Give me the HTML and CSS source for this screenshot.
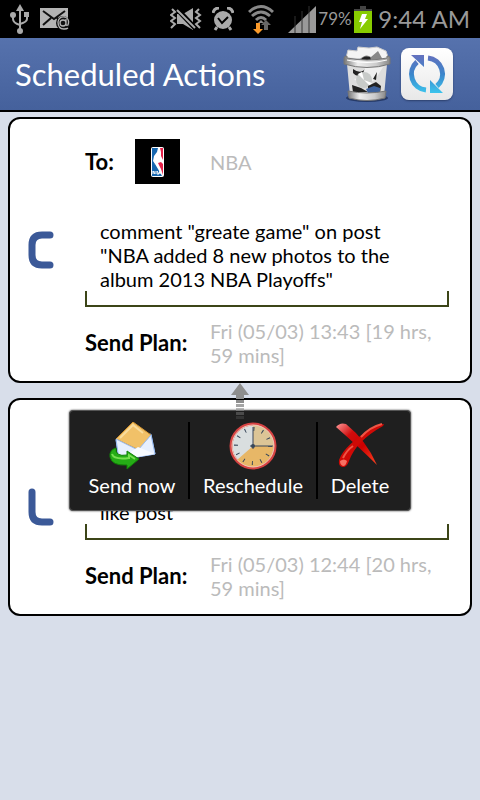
FILE: index.html
```html
<!DOCTYPE HTML>
<html lang="en">
<head>
<meta charset="utf-8">
<meta name="viewport" content="width=device-width, initial-scale=1">
<title>Scheduled Actions</title>
<link rel="stylesheet" href="styles.css">
</head>

<body>
<!-- status bar -->
<div class="status">
	<svg class="usb" width="20" height="32" viewBox="0 0 20 32" fill="none" stroke="#aaa" stroke-width="2">
		<path d="M10 5v22M3 12v4q0 4 7 6M17 12v4q0 3 -7 5"/>
		<path d="M10 1l4 7H6z" fill="#aaa" stroke="none"/>
		<circle cx="10" cy="28" r="3" fill="#aaa" stroke="none"/>
		<circle cx="3" cy="12" r="3" fill="#aaa" stroke="none"/>
		<path d="M14 9h5v5h-5z" fill="#aaa" stroke="none"/>
	</svg>
	<svg class="mail" width="30" height="24" viewBox="0 0 30 24">
		<path d="M0 1h28v20H0z" fill="#b4b4b4"/>
		<path d="M3 4l11 8L25 4M3 18l8-7M17 11l4 4" fill="none" stroke="#111" stroke-width="2"/>
		<circle cx="23" cy="16" r="7" fill="#111"/>
		<path d="M26 12v5q0 2 2 1q2-6-3-8q-6-1-7 5q0 7 6 7q3 0 4-1M26 16a3 3 0 1 1-6 0a3 3 0 0 1 6 0" fill="none" stroke="#b4b4b4" stroke-width="1.3"/>
	</svg>
	<svg class="mute" width="32" height="22" viewBox="0 0 32 22">
		<path d="M7 6h6l10-6v22l-10-6H7z" fill="#aaa"/>
		<path d="M6 0l19 20" stroke="#000" stroke-width="5"/>
		<path d="M7 2l18 18" stroke="#aaa" stroke-width="2"/>
		<path d="M2 1l3 3-4 3 4 3-4 3 4 3-4 4M29 1l-3 3 4 3-4 3 4 3-4 3 4 4" fill="none" stroke="#aaa" stroke-width="2"/>
	</svg>
	<svg class="alarm" width="22" height="24" viewBox="0 0 22 24">
		<circle cx="11" cy="13" r="9" fill="#aaa"/>
		<path d="M1 6q1-5 6-5M21 6q-1-5-6-5M5 20l-2 3M17 20l2 3" fill="none" stroke="#aaa" stroke-width="3"/>
		<path d="M6 11l4 5 6-6" fill="none" stroke="#000" stroke-width="2"/>
	</svg>
	<svg class="wifi" width="26" height="30" viewBox="0 0 26 30">
		<path d="M1 8q12-11 24 0M4 12q9-8 18 0M8 16q5-5 10 0" fill="none" stroke="#888" stroke-width="3"/>
		<path d="M13 16l3 3h-6z" fill="#888"/>
		<path d="M8 19h4v6h3l-5 5-5-5h3z" fill="#fa9a2a"/>
		<path d="M16 26v-5h-3l5-5 5 5h-3v5z" fill="#666"/>
	</svg>
	<svg class="signal" width="28" height="27" viewBox="0 0 28 27">
		<path d="M28 0v27H0z" fill="#999"/>
		<path d="M7 10v17M14 5v22M21 0v27" stroke="#333" stroke-width="1"/>
	</svg>
	<span class="percent">79%</span>
	<svg class="battery" width="18" height="27" viewBox="0 0 18 27">
		<path d="M6 0h6v3h6v3H0V3h6z" fill="#444"/>
		<path d="M0 5h18v22H0z" fill="#8c0"/>
		<path d="M8 8h5l-2 5h3l-8 10 2-7H5z" fill="#fff"/>
	</svg>
	<span class="clock">9:44 AM</span>
</div>

<header class="header">
	<h1>Scheduled Actions</h1>
	<button type="button" class="tool trash" aria-label="Clear">
		<svg width="48" height="56" viewBox="0 0 48 56">
			<defs>
				<linearGradient id="metal" x1="0" x2="1" y1="0" y2="0">
					<stop offset="0" stop-color="#777"/>
					<stop offset="0.3" stop-color="#eee"/>
					<stop offset="0.7" stop-color="#ccc"/>
					<stop offset="1" stop-color="#888"/>
				</linearGradient>
			</defs>
			<ellipse cx="24" cy="52" rx="21" ry="4" fill="#263a68"/>
			<path d="M3 12l2-8 9 1 1-4 11 1 8-1 9 4 3 9z" fill="#f4f4f4" stroke="#ccc" stroke-width="1"/>
			<path d="M17 13q6-6 11-2l7-6 5 9z" fill="#888"/>
			<path d="M18 14q2-5 9-3l1 3z" fill="#222"/>
			<path d="M4 18h40l-3 32H7z" fill="#ddd"/>
			<path d="M10 23q8 6 13-1l-3 7q-6 3-10-2zM9 39l9 3 7 4H10z" fill="#222"/>
			<path d="M22 22l18-1-8 13-14 5-7-6q8 0 11-11z" fill="#efefef"/>
			<circle cx="21" cy="34" r="8" fill="#c8cbc9"/>
			<path d="M21 34l-6-6 4-2zM21 34l8 3-2 3z" fill="#fff"/>
			<path d="M34 26l-4 7 3 1zM25 40l8-4 5 4-1 7-12-2z" fill="#222"/>
			<path d="M23 43l8-3 6 2v5H25z" fill="#3d619b"/>
			<path d="M1 12q0-2 3-2v2q20 4 40 0v-2q3 0 3 2v6q-23 7-46 0z" fill="url(#metal)" stroke="#777" stroke-width="1"/>
			<path d="M4 14q20 5 40 0" fill="none" stroke="#fff" stroke-width="1"/>
			<path d="M5 45q19 4 38 0l-1 7q-18 5-36 0z" fill="url(#metal)" stroke="#777" stroke-width="1"/>
		</svg>
	</button>
	<button type="button" class="tool refresh" aria-label="Refresh">
		<svg width="40" height="40" viewBox="0 0 40 40">
			<defs>
				<linearGradient id="sync" gradientUnits="userSpaceOnUse" x1="0" x2="0" y1="0" y2="40">
					<stop offset="0" stop-color="#6670bd"/>
					<stop offset="0.5" stop-color="#3b85cb"/>
					<stop offset="1" stop-color="#3bc7ee"/>
				</linearGradient>
			</defs>
			<g fill="none" stroke="url(#sync)" stroke-width="5">
				<path d="M21 4a16 16 0 0 1 9 28"/>
				<path d="M19 36a16 16 0 0 1-9-28"/>
			</g>
			<path d="M4 1h13v12zM23 26v13h13z" fill="url(#sync)"/>
		</svg>
	</button>
</header>

<main class="list">
	<article class="card">
		<svg class="type" width="26" height="38" viewBox="0 0 26 38">
			<path d="M22 4H14Q4 4 4 14V24Q4 34 14 34H22"/>
		</svg>
		<div class="body">
			<div class="row to">
				<span class="label">To:</span>
				<svg class="logo" width="45" height="45" viewBox="0 0 45 45">
					<path d="M0 0h45v45H0z" fill="#000"/>
					<rect x="16" y="8" width="13" height="30" rx="2" fill="#fff"/>
					<path d="M17 9h6l-1 4-3 4-1 5 2 3-2 7h-1z" fill="#1767af"/>
					<path d="M17 28l3-3 3 5 4 7H17z" fill="#1767af"/>
					<path d="M25 9h3v27l-2-6-3-6 3-1 2 2v-4l-2-4v-4z" fill="#e7224a"/>
					<path d="M18 35v-3l2 3v-3M22 32v3h2l-2-3zM24 35l1-3 1 3" fill="none" stroke="#fff" stroke-width="1"/>
				</svg>
				<span class="value">NBA</span>
			</div>
			<p class="text">comment "greate game" on post "NBA added 8 new photos to the album 2013 NBA Playoffs"</p>
			<div class="bracket"></div>
			<div class="row plan">
				<span class="label">Send Plan:</span>
				<span class="value">Fri (05/03) 13:43 [19 hrs, 59 mins]</span>
			</div>
		</div>
	</article>

	<article class="card">
		<svg class="type" width="26" height="38" viewBox="0 0 26 38">
			<path d="M4 4V24Q4 34 14 34H22"/>
		</svg>
		<div class="body">
			<div class="row to"></div>
			<p class="text">like post</p>
			<div class="bracket"></div>
			<div class="row plan">
				<span class="label">Send Plan:</span>
				<span class="value">Fri (05/03) 12:44 [20 hrs, 59 mins]</span>
			</div>
		</div>

		<!-- quick actions, opened over the card -->
		<div class="popup">
			<svg class="arrow" width="18" height="40" viewBox="0 0 18 40" fill="#8e8e8e">
				<path d="M9 0l9 12h-5v4H5v-4H0z"/>
				<path d="M5 17h8v3H5z"/>
				<path d="M5 21h8v3H5z" opacity="0.8"/>
				<path d="M5 25h8v3H5z" opacity="0.6"/>
				<path d="M5 29h8v3H5z" opacity="0.4"/>
				<path d="M5 33h8v3H5z" opacity="0.2"/>
			</svg>
			<button type="button" class="action send">
				<svg width="48" height="48" viewBox="0 0 48 48">
					<path d="M8 18l35-6 4 20-36 6z" fill="#dce9ff" stroke="#6d9ae5" stroke-width="1"/>
					<path d="M25 0l18 13-12 15-23-11z" fill="#f1c168" stroke="#d09231" stroke-width="1"/>
					<path d="M12 16L25 3l10 8" fill="none" stroke="#f9dc9d" stroke-width="2"/>
					<path d="M8 17l22 11 13-15 4 19-36 6z" fill="#e7f0ff" stroke="#9abbed" stroke-width="1"/>
					<path d="M11 38l19-13 17 7z" fill="#f7faff"/>
					<path d="M8 26q-7 2-6 9 2 9 17 8v4l12-10-12-8v4q-12 2-11-7z" fill="#25ac16" stroke="#118007" stroke-width="1"/>
					<path d="M4 32q2 6 17 4v-3l6 4" fill="none" stroke="#76df50" stroke-width="2"/>
				</svg>
				<span>Send now</span>
			</button>
			<button type="button" class="action plan-again">
				<svg width="48" height="48" viewBox="0 0 48 48">
					<circle cx="24" cy="24" r="22" fill="#d9dedf" stroke="#d64343" stroke-width="3"/>
					<path d="M24 24V3a21 21 0 1 1-16 35z" fill="#e7b767"/>
					<path d="M24 24V3a21 21 0 0 1 21 21z" fill="#dcc596"/>
					<circle cx="24" cy="24" r="21" fill="none" stroke="#f1c8b8" stroke-width="1"/>
					<circle cx="24" cy="24" r="17" fill="none" stroke="#38475a" stroke-width="4" stroke-dasharray="1 7.9"/>
					<path d="M24 5v22M21 24h23" stroke="#38475a" stroke-width="1"/>
					<circle cx="24" cy="24" r="2" fill="#38475a"/>
				</svg>
				<span>Reschedule</span>
			</button>
			<button type="button" class="action delete">
				<svg width="48" height="48" viewBox="0 0 48 48">
					<defs>
						<linearGradient id="cross" x1="0" x2="1" y1="0" y2="1">
							<stop offset="0" stop-color="#f99"/>
							<stop offset="0.3" stop-color="#d00d0d"/>
							<stop offset="0.6" stop-color="#c00"/>
							<stop offset="1" stop-color="#f42"/>
						</linearGradient>
					</defs>
					<path d="M0 5q4-5 10-3 20 16 31 41Q24 26 0 5z" fill="url(#cross)"/>
					<path d="M48 2q-4 0-10 3Q8 23 3 38q-1 7 4 7 4 0 6-6Q20 19 47 4z" fill="#cf0a06"/>
					<path d="M46 2Q34 5 25 15M7 36q4-8 10-12" fill="none" stroke="#ee5545" stroke-width="2"/>
					<path d="M4 39q4-3 7 0-1 5-4 5-3-1-3-5z" fill="#f77163"/>
				</svg>
				<span>Delete</span>
			</button>
		</div>
	</article>
</main>
</body>
</html>
```

FILE: styles.css
```css
* {margin:0; padding:0; box-sizing:border-box;}
body {background:#d8deea; color:#000; font-family:Lato, "Open Sans", sans-serif; font-size:20px; line-height:24px;}
svg {display:block; flex:none;}
button {border:0; background:none; font:inherit; color:inherit; cursor:pointer;}

/* status bar */
.status {display:flex; align-items:center; height:38px; padding:0 10px; background:#000; color:#999;}
.mail {margin-left:10px;}
.mute {margin-left:auto;}
.alarm {margin-left:10px;}
.wifi {margin-left:14px;}
.signal {margin-left:14px;}
.percent {width:38px; text-align:center; font-size:17px;}
.clock {width:98px; text-align:right; font-size:24px; white-space:nowrap;}

/* title bar */
.header {display:flex; align-items:center; height:74px; padding:0 27px 0 15px; border-bottom:2px solid #000; background:linear-gradient(#5672ad, #45619c); color:#fff;}
.header h1 {flex:1; font-size:31px; line-height:40px; font-weight:400; white-space:nowrap;}
.refresh {display:flex; align-items:center; justify-content:center; width:52px; height:52px; margin-left:10px; border-radius:8px; background:linear-gradient(#fff, #e8e8e8); box-shadow:0 1px 2px #2c3f6c;}

/* cards */
.list {display:flex; flex-direction:column; gap:15px; padding:5px 8px;}
.card {display:flex; align-items:center; position:relative; border:2px solid #000; border-radius:12px; background:#fff; padding:0 21px 0 18px;}
.type {margin-right:31px; fill:none; stroke:#3b5998; stroke-width:7; stroke-linecap:round;}
.body {flex:1; padding:20px 0 14px;}
.row {display:flex; align-items:center;}
.to {height:45px;}
.label {width:125px; font-size:22px; font-weight:700; white-space:nowrap;}
.to .label {width:50px;}
.logo {margin-right:30px;}
.value {flex:1; color:#bbb;}
.text {margin-top:35px; padding:0 30px 0 15px;}
.bracket {height:16px; border:2px solid #3c4518; border-top:0;}
.plan {margin-top:12px;}

/* quick action popup */
.popup {display:flex; position:absolute; top:10px; left:50%; transform:translateX(-50%); padding:11px 0; border:1px solid #555; border-radius:4px; background:#1f1f1f; color:#fff; box-shadow:0 0 2px #333;}
.arrow {position:absolute; left:50%; top:-28px; transform:translateX(-50%);}
.action {display:flex; flex-direction:column; align-items:center; gap:3px; width:128px; height:77px; border-left:2px solid #000; white-space:nowrap;}
.action.send {width:118px; padding-left:6px; border-left:0;}
.action.delete {width:94px; padding-right:8px;}
```
